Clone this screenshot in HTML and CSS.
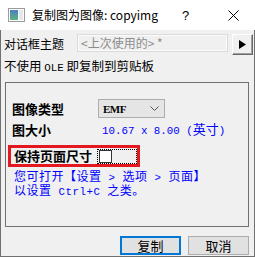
FILE: index.html
```html
<!DOCTYPE html>
<html lang="zh-CN">
<head>
    <meta charset="UTF-8">
    <title>复制图为图像</title>
    <link rel="stylesheet" href="styles.css">
</head>
<body>

<div class="window">
    <div class="titlebar">
        <svg class="app-icon" width="17" height="14" viewBox="0 0 17 14">
            <defs>
                <linearGradient id="pic" x1="0" y1="0" x2="0" y2="1">
                    <stop offset="0" stop-color="#4a7fc4"/>
                    <stop offset="1" stop-color="#5fb27c"/>
                </linearGradient>
            </defs>
            <rect x="0.5" y="0.5" width="16" height="13" fill="#fff" stroke="#9a9a9a"/>
            <rect x="2" y="2" width="8" height="10" fill="url(#pic)"/>
            <rect x="11" y="2" width="4" height="10" fill="#e4e8ec"/>
        </svg>
        <span class="title">复制图为图像: copyimg</span>
        <span class="help">?</span>
        <svg class="close" width="11" height="11" viewBox="0 0 11 11">
            <path d="M0.5 0.5 L10.5 10.5 M10.5 0.5 L0.5 10.5" stroke="#000" stroke-width="1"/>
        </svg>
    </div>

    <div class="dialog">
        <div class="theme-row">
            <span class="theme-label">对话框主题</span>
            <div class="theme-combo">&lt;上次使用的&gt; *</div>
            <button class="theme-btn">
                <svg width="7" height="9" viewBox="0 0 7 9"><path d="M0 0 L7 4.5 L0 9 Z" fill="#000"/></svg>
            </button>
        </div>

        <div class="note">不使用 <span class="mono">OLE</span> 即复制到剪贴板</div>

        <div class="group">
            <div class="field">
                <span class="field-label">图像类型</span>
                <div class="select">
                    <span class="select-text">EMF</span>
                    <svg width="9" height="6" viewBox="0 0 9 6"><path d="M0.5 0.5 L4.5 4.5 L8.5 0.5" fill="none" stroke="#555"/></svg>
                </div>
            </div>

            <div class="field size-row">
                <span class="field-label">图大小</span>
                <span class="field-value"><span class="mono">10.67 x 8.00 (</span>英寸<span class="mono">)</span></span>
            </div>

            <div class="keep">
                <span class="keep-label">保持页面尺寸</span>
                <span class="focus"><span class="checkbox"></span></span>
            </div>

            <p class="hint">您可打开【设置<span class="mono"> &gt; </span>选项<span class="mono"> &gt; </span>页面】</p>
            <p class="hint">以设置<span class="mono"> Ctrl+C </span>之类。</p>
        </div>

        <div class="actions">
            <button class="btn btn-default">复制</button>
            <button class="btn">取消</button>
        </div>
    </div>
</div>

</body>
</html>
```

FILE: styles.css
```css
/* Global Styles */
body {
    margin: 0;
    padding: 0;
    font-family: "Noto Sans CJK SC", "Noto Sans", sans-serif;
    font-size: 12px;
    color: #000;
    background: #fff;
}

.window {
    width: 255px;
    height: 257px;
    display: flex;
    flex-direction: column;
}

/* Title bar */
.titlebar {
    height: 30px;
    background: #fff;
    display: flex;
    align-items: center;
    flex-shrink: 0;
}

.app-icon {
    margin-left: 8px;
    margin-top: -1px;
}

.title {
    margin-left: 7px;
    font-size: 12px;
    line-height: 16px;
}

.help {
    margin-left: 24px;
    font-family: "Liberation Sans", sans-serif;
    font-size: 13px;
}

.close {
    margin-left: 39px;
}

/* Dialog body */
.dialog {
    flex: 1;
    background: #f0f0f0;
    border: 1px solid #707070;
    border-top: none;
    padding: 3px 0 0 3px;
    display: flex;
    flex-direction: column;
}

.theme-row {
    display: flex;
    align-items: center;
    height: 22px;
}

.theme-label {
    width: 73px;
    line-height: 16px;
}

.theme-combo {
    width: 146px;
    height: 16px;
    border: 1px solid #dadada;
    box-shadow: inset 0 0 0 1px #fbfbfb;
    color: #8c8c8c;
    font-size: 12px;
    line-height: 16px;
    padding-left: 3px;
    box-sizing: content-box;
    margin-top: -2px;
}

.theme-btn {
    margin-left: 4px;
    width: 21px;
    height: 21px;
    padding: 0;
    background: #f0f0f0;
    border: 1px solid;
    border-color: #fff #696969 #696969 #fff;
    box-shadow: inset -1px -1px 0 #a0a0a0;
    display: flex;
    align-items: center;
    justify-content: center;
}

.note {
    margin-top: 3px;
    line-height: 16px;
    font-size: 12.5px;
}

.mono {
    font-family: "Liberation Mono", monospace;
    font-size: 10.8px;
}

/* Group box */
.group {
    margin: 6px 0 0 1px;
    width: 244px;
    height: 145px;
    border: 1px solid #707070;
    padding: 16px 0 0 6px;
    box-sizing: border-box;
}

.field {
    display: flex;
    align-items: center;
    height: 19px;
}

.field-label {
    width: 86px;
    font-weight: bold;
    font-size: 13px;
    line-height: 16px;
}

.select {
    width: 56px;
    height: 17px;
    border: 1px solid #adadad;
    background: #e5e5e5;
    display: flex;
    align-items: center;
    justify-content: space-between;
    padding: 0 5px 0 4px;
    box-sizing: content-box;
}

.select-text {
    font-family: "Liberation Serif", serif;
    font-size: 11px;
    font-weight: bold;
    letter-spacing: -0.5px;
}

.size-row {
    margin-top: 4px;
    height: 16px;
}

.field-value {
    color: #0000ff;
    padding-left: 4px;
    font-size: 13px;
    line-height: 16px;
}

.keep {
    margin: 7px 0 0 -4px;
    width: 132px;
    height: 22px;
    border: 3px solid #e3191f;
    box-sizing: border-box;
    display: flex;
    align-items: center;
    padding-left: 3px;
}

.keep-label {
    width: 83px;
    font-weight: bold;
    font-size: 13px;
    line-height: 16px;
}

.focus {
    flex: 1;
    height: 15px;
    border: 1px dotted #000;
    box-sizing: border-box;
    display: flex;
    align-items: center;
    padding-left: 1px;
}

.checkbox {
    width: 11px;
    height: 11px;
    background: #fff;
    border: 1px solid #333;
}

.hint {
    margin: 0 0 0 2px;
    color: #0000ff;
    font-size: 12px;
    line-height: 14px;
    height: 14px;
    letter-spacing: 0.5px;
}

.keep + .hint {
    margin-top: 2px;
}

/* Buttons */
.actions {
    margin-top: 9px;
    display: flex;
    justify-content: flex-end;
    gap: 7px;
    padding-right: 5px;
}

.btn {
    width: 61px;
    height: 19px;
    padding: 0;
    background: #e1e1e1;
    border: 1px solid #adadad;
    font-family: "Noto Sans CJK SC", sans-serif;
    font-size: 13px;
    line-height: 16px;
    color: #000;
}

.btn-default {
    border: 2px solid #0078d7;
}
```
